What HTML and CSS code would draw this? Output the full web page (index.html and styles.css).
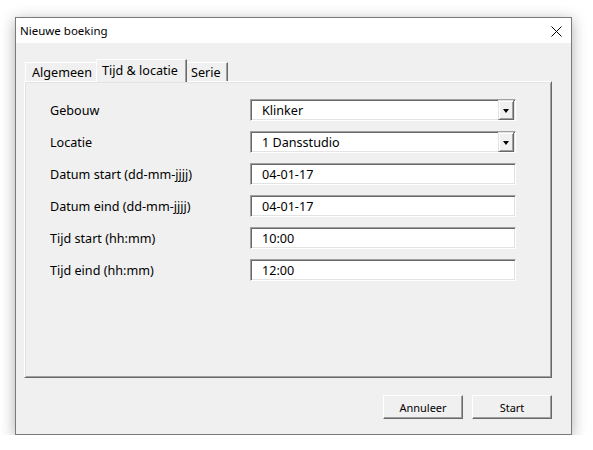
FILE: index.html
```html
<!DOCTYPE html>
<html lang="nl">
<head>
<meta charset="utf-8">
<title>Nieuwe boeking</title>
<link rel="stylesheet" href="styles.css">
</head>
<body>
<div class="window">
  <div class="titlebar">
    <span class="title">Nieuwe boeking</span>
    <svg class="close" width="11" height="11" viewBox="0 0 11 11"><path d="M0.5 0.5 L10.5 10.5 M10.5 0.5 L0.5 10.5" stroke="#000" stroke-width="1" fill="none"/></svg>
  </div>
  <div class="client">
    <div class="tabs">
      <div class="tab first">Algemeen</div>
      <div class="tab active">Tijd &amp; locatie</div>
      <div class="tab last">Serie</div>
    </div>
    <div class="panel">
      <div class="row">
        <span class="label">Gebouw</span>
        <div class="field combo"><span class="value">Klinker</span><span class="drop"><i class="arrow"></i></span></div>
      </div>
      <div class="row">
        <span class="label">Locatie</span>
        <div class="field combo"><span class="value">1 Dansstudio</span><span class="drop"><i class="arrow"></i></span></div>
      </div>
      <div class="row">
        <span class="label">Datum start (dd-mm-jjjj)</span>
        <div class="field"><span class="value">04-01-17</span></div>
      </div>
      <div class="row">
        <span class="label">Datum eind (dd-mm-jjjj)</span>
        <div class="field"><span class="value">04-01-17</span></div>
      </div>
      <div class="row">
        <span class="label">Tijd start (hh:mm)</span>
        <div class="field"><span class="value">10:00</span></div>
      </div>
      <div class="row">
        <span class="label">Tijd eind (hh:mm)</span>
        <div class="field"><span class="value">12:00</span></div>
      </div>
    </div>
    <div class="buttons">
      <div class="btn">Annuleer</div>
      <div class="btn">Start</div>
    </div>
  </div>
</div>
</body>
</html>
```
FILE: styles.css
```css
html, body {
  margin: 0;
  padding: 0;
  background: #ffffff;
}
body {
  font-family: "Noto Sans", "Liberation Sans", sans-serif;
  font-size: 12px;
  color: #000;
}
.window {
  margin: 17px 0 0 15px;
  width: 555px;
  height: 416px;
  border: 1px solid #7a7a7a;
  background: #f0f0f0;
  box-shadow: 0 3px 14px rgba(0, 0, 0, 0.32);
  display: flex;
  flex-direction: column;
}
.titlebar {
  height: 25px;
  background: #ffffff;
  display: flex;
  align-items: center;
  padding-left: 4px;
  padding-right: 9px;
}
.title {
  flex: 1;
  font-size: 11.5px;
}
.close {
  display: block;
  margin-top: 1px;
}
.client {
  flex: 1;
  display: flex;
  flex-direction: column;
  padding: 16px 19px 0 8px;
}
.tabs {
  height: 22px;
  display: flex;
  align-items: flex-end;
  padding-left: 1px;
  position: relative;
  z-index: 1;
}
.tab {
  height: 19px;
  line-height: 19px;
  box-sizing: border-box;
  padding: 0 6px;
  border-top: 1px solid #ffffff;
  font-size: 12.6px;
  white-space: nowrap;
}
.tab.first {
  border-left: 1px solid #ffffff;
  width: 71px;
}
.tab.active {
  height: 23px;
  margin-bottom: -1px;
  line-height: 21px;
  padding: 0 6px 0 5px;
  width: 91px;
  border-left: 1px solid #ffffff;
  border-right: 1px solid #696969;
  box-shadow: inset -1px 0 0 #a0a0a0;
  background: #f0f0f0;
}
.tab.last {
  width: 41px;
  padding-left: 4px;
  border-right: 1px solid #696969;
  box-shadow: inset -1px 0 0 #a0a0a0;
}
.panel {
  height: 297px;
  box-sizing: border-box;
  border-left: 1px solid #ffffff;
  border-top: 1px solid #ffffff;
  border-right: 1px solid #696969;
  border-bottom: 1px solid #696969;
  box-shadow: inset 1px 1px 0 #e3e3e3, inset -1px -1px 0 #a0a0a0;
  padding: 17px 0 0 25px;
  display: flex;
  flex-direction: column;
  gap: 10px;
}
.row {
  display: flex;
  align-items: center;
  height: 22px;
}
.label {
  width: 200px;
  font-size: 12.6px;
  padding-top: 1px;
}
.field {
  width: 266px;
  height: 22px;
  box-sizing: border-box;
  background: #ffffff;
  border: 1px solid;
  border-color: #a0a0a0 #ffffff #ffffff #a0a0a0;
  box-shadow: inset 1px 1px 0 #696969, inset -1px -1px 0 #e3e3e3;
  display: flex;
  align-items: center;
  padding-left: 11px;
}
.value {
  flex: 1;
  font-size: 12.6px;
  padding-top: 1px;
}
.drop {
  width: 16px;
  height: 20px;
  margin-right: 1px;
  box-sizing: border-box;
  background: #f0f0f0;
  border: 1px solid;
  border-color: #e3e3e3 #696969 #696969 #e3e3e3;
  box-shadow: inset 1px 1px 0 #ffffff, inset -1px -1px 0 #a0a0a0;
  display: flex;
  align-items: center;
  justify-content: center;
}
.arrow {
  display: block;
  width: 0;
  height: 0;
  border-left: 3.5px solid transparent;
  border-right: 3.5px solid transparent;
  border-top: 4px solid #000;
  margin-top: 1px;
}
.buttons {
  display: flex;
  justify-content: flex-end;
  gap: 9px;
  margin-top: 17px;
}
.btn {
  width: 80px;
  height: 24px;
  box-sizing: border-box;
  border: 1px solid;
  border-color: #ffffff #696969 #696969 #ffffff;
  box-shadow: inset -1px -1px 0 #a0a0a0;
  background: #f0f0f0;
  font-size: 11px;
  display: flex;
  align-items: center;
  justify-content: center;
}
```
